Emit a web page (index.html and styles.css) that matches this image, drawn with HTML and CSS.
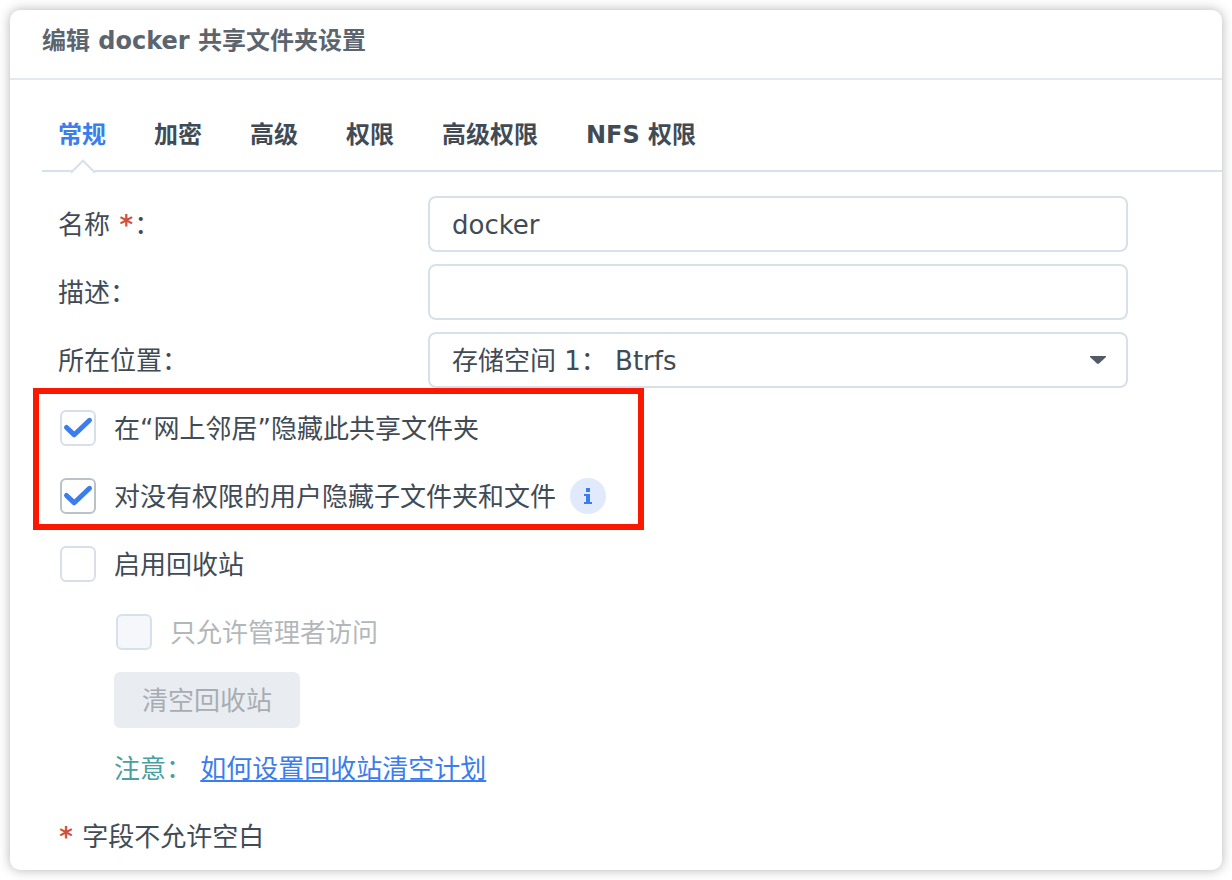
FILE: index.html
```html
<!DOCTYPE html>
<html lang="zh-CN">
  <head>
    <title>编辑 docker 共享文件夹设置</title>
    <meta charset="utf-8">
    <link rel="stylesheet" href="styles.css">
  </head>
  <body>

  <div class="dialog">
    <h1 class="title">编辑 docker 共享文件夹设置</h1>

    <nav class="tabs">
      <button type="button" class="tab active">常规</button>
      <button type="button" class="tab">加密</button>
      <button type="button" class="tab">高级</button>
      <button type="button" class="tab">权限</button>
      <button type="button" class="tab">高级权限</button>
      <button type="button" class="tab">NFS 权限</button>
    </nav>

    <form class="form">
      <div class="row">
        <label class="name" for="share-name">名称 <span class="star">*</span>：</label>
        <input class="field" type="text" id="share-name" value="docker">
      </div>
      <div class="row">
        <label class="name" for="share-desc">描述：</label>
        <input class="field" type="text" id="share-desc">
      </div>
      <div class="row">
        <label class="name" for="share-volume">所在位置：</label>
        <select class="field" id="share-volume">
          <option>存储空间 1： Btrfs</option>
        </select>
      </div>

      <div class="marked">
        <div class="row">
          <input class="check" type="checkbox" id="hide-network" checked>
          <label for="hide-network">在“网上邻居”隐藏此共享文件夹</label>
        </div>
        <div class="row">
          <input class="check hover" type="checkbox" id="hide-files" checked>
          <label for="hide-files">对没有权限的用户隐藏子文件夹和文件</label>
          <svg class="info" width="36" height="36" viewBox="0 0 36 36">
            <circle cx="18" cy="18" r="18" fill="#e1eafc"/>
            <path d="M16 10h4v4h-4zM14 16h6v8h2v2h-8v-2h2v-6h-2z" fill="#3c7ded"/>
          </svg>
        </div>
      </div>

      <div class="row">
        <input class="check" type="checkbox" id="recycle">
        <label for="recycle">启用回收站</label>
      </div>
      <div class="row sub">
        <input class="check" type="checkbox" id="admin-only" disabled>
        <label class="disabled" for="admin-only">只允许管理者访问</label>
      </div>
      <div class="row sub">
        <button type="button" class="btn" disabled>清空回收站</button>
      </div>
      <div class="row sub">
        <span class="note">注意：&nbsp;</span><a class="link" href="#">如何设置回收站清空计划</a>
      </div>
      <div class="row">
        <span class="hint"><span class="star">*</span> 字段不允许空白</span>
      </div>
    </form>
  </div>

  </body>
</html>
```

FILE: styles.css
```css
* {
  box-sizing: border-box;
}
body {
  margin: 0;
  padding: 10px;
  background: #fff;
  color: #414b55;
  font-family: "DejaVu Sans", "Noto Sans CJK SC", sans-serif;
  font-size: 26px;
  line-height: 36px;
}
input, select, button {
  margin: 0;
  color: inherit;
  font: inherit;
}
.dialog {
  background: #fff;
  border-radius: 10px;
  box-shadow: 0 0 12px rgba(0,0,0,0.3);
}
.title {
  margin: 0;
  padding: 14px 32px 20px;
  border-bottom: 2px solid #e3e9ee;
  color: #5c656e;
  font-size: 24px;
  font-weight: bold;
  line-height: 34px;
}

/* tabs */
.tabs {
  display: flex;
  gap: 48px;
  margin-left: 32px;
  padding: 38px 16px 0;
  border-bottom: 2px solid #d7e1eb;
}
.tab {
  position: relative;
  padding: 0 0 18px;
  border: 0;
  background: none;
  font-size: 24px;
  font-weight: bold;
  line-height: 34px;
  cursor: pointer;
}
.tab.active {
  color: #3c7ded;
}
.tab.active::after {
  content: "";
  position: absolute;
  left: 50%;
  bottom: -11px;
  width: 16px;
  height: 16px;
  margin-left: -8px;
  border: solid #d7e1eb;
  border-width: 2px 0 0 2px;
  background: #fff;
  transform: rotate(45deg);
}

/* form */
.form {
  display: flex;
  flex-direction: column;
  gap: 12px;
  padding: 24px 48px 6px;
}
.row {
  display: flex;
  align-items: center;
  height: 56px;
}
.row > label, .note, .link, .hint {
  padding-top: 2px;
}
.sub {
  padding-left: 56px;
}
.name {
  width: 370px;
}
.star {
  display: inline-block;
  width: 16px;
  color: #d04f3f;
  font-weight: bold;
  text-align: center;
}
.field {
  flex: 1;
  min-width: 0;
  max-width: 700px;
  height: 56px;
  padding: 2px 22px 0;
  border: 2px solid #d7e1eb;
  border-radius: 8px;
  background: #fff;
}
select.field {
  appearance: none;
  border-color: #d9dfea;
  background: #fff url("data:image/svg+xml,%3Csvg xmlns='http://www.w3.org/2000/svg' width='16' height='8'%3E%3Cpath d='M0 0h16v1L9 7.600Q8 8.400 7 7.600L0 1z' fill='%23525a66'/%3E%3C/svg%3E") no-repeat right 20px top 22px;
}
.check {
  appearance: none;
  flex: none;
  width: 36px;
  height: 36px;
  margin: 0 18px 0 2px;
  border: 2px solid #d9dfea;
  border-radius: 6px;
  background: #fff border-box;
}
.check:checked {
  background-image: url("data:image/svg+xml,%3Csvg xmlns='http://www.w3.org/2000/svg' width='36' height='36'%3E%3Cpath d='M6.500 17.500L14.300 24.800L29.500 10.300' fill='none' stroke='%233c7ded' stroke-width='5' stroke-linecap='round' stroke-linejoin='round'/%3E%3C/svg%3E");
}
.check.hover {
  border-color: #bcc1c8;
}
.check:disabled {
  border-color: #d7e1eb;
  background: #f5f7fb;
}
.disabled {
  color: #b3b7bb;
}
.info {
  margin-left: 14px;
}

/* red frame round the two hide options */
.marked {
  position: relative;
  display: flex;
  flex-direction: column;
  align-self: flex-start;
  gap: 12px;
}
.marked::before {
  content: "";
  position: absolute;
  inset: -12px -38px -6px -25px;
  border: 6px solid #fa1900;
  pointer-events: none;
}

.btn {
  height: 56px;
  padding: 2px 28px 0;
  border: 0;
  border-radius: 6px;
  background: #e9edf2;
  color: #a8adb2;
}
.note {
  color: #4a9fa0;
}
.link {
  color: #3c7ded;
  text-decoration: underline;
  text-decoration-thickness: 2px;
  text-underline-offset: 2px;
  text-decoration-skip-ink: none;
}
```
